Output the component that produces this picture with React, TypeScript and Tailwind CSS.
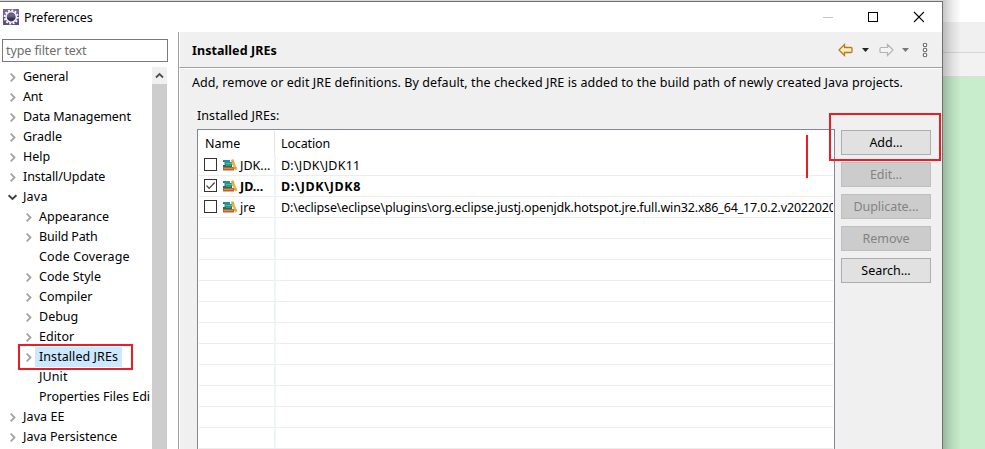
import React from "react";

type Node = { label: string; depth: 0 | 1; arrow?: "right" | "down"; selected?: boolean; track: string };

const tree: Node[] = [
  { label: "General", depth: 0, arrow: "right", track: "tracking-[-0.1px]" },
  { label: "Ant", depth: 0, arrow: "right", track: "tracking-[-0.2px]" },
  { label: "Data Management", depth: 0, arrow: "right", track: "tracking-[-0.13px]" },
  { label: "Gradle", depth: 0, arrow: "right", track: "tracking-normal" },
  { label: "Help", depth: 0, arrow: "right", track: "tracking-normal" },
  { label: "Install/Update", depth: 0, arrow: "right", track: "tracking-[-0.1px]" },
  { label: "Java", depth: 0, arrow: "down", track: "tracking-[0.2px]" },
  { label: "Appearance", depth: 1, arrow: "right", track: "tracking-normal" },
  { label: "Build Path", depth: 1, arrow: "right", track: "tracking-[-0.15px]" },
  { label: "Code Coverage", depth: 1, track: "tracking-[0.15px]" },
  { label: "Code Style", depth: 1, arrow: "right", track: "tracking-[0.05px]" },
  { label: "Compiler", depth: 1, arrow: "right", track: "tracking-normal" },
  { label: "Debug", depth: 1, arrow: "right", track: "tracking-normal" },
  { label: "Editor", depth: 1, arrow: "right", track: "tracking-normal" },
  { label: "Installed JREs", depth: 1, arrow: "right", selected: true, track: "tracking-[0.07px]" },
  { label: "JUnit", depth: 1, track: "tracking-[0.1px]" },
  { label: "Properties Files Edi", depth: 1, track: "tracking-normal" },
  { label: "Java EE", depth: 0, arrow: "right", track: "tracking-[0.1px]" },
  { label: "Java Persistence", depth: 0, arrow: "right", track: "tracking-normal" },
];

const jres = [
  { name: "JDK...", location: "D:\\JDK\\JDK11", checked: false, track: "tracking-[0.23px]" },
  { name: "JD...", location: "D:\\JDK\\JDK8", checked: true, track: "tracking-[0.6px]" },
  { name: "jre", location: "D:\\eclipse\\eclipse\\plugins\\org.eclipse.justj.openjdk.hotspot.jre.full.win32.x86_64_17.0.2.v2022020", checked: false, track: "tracking-[-0.155px]" },
];

const buttons = [
  { label: "Add...", enabled: true },
  { label: "Edit...", enabled: false },
  { label: "Duplicate...", enabled: false },
  { label: "Remove", enabled: false },
  { label: "Search...", enabled: true },
];

function EclipseIcon() {
  return (
    <svg width="16" height="16" viewBox="0 0 16 16" className="shrink-0">
      <rect width="16" height="16" fill="#5f4d84" />
      <path d="M0 0h16v4L0 8z" fill="#75659a" />
      <circle cx="8.200" cy="8" r="6.600" fill="none" stroke="#fff" strokeWidth="1.800" strokeDasharray="1.900 1.555" />
      <circle cx="8.200" cy="8" r="5.200" fill="#3a3158" stroke="#f4f2f6" strokeWidth="1.600" />
      <path d="M4.500 5.500q3.500-3 7.400 0v2H4.200z" fill="#6a6384" />
      <path d="M4 8h8.400" stroke="#8b84a4" strokeWidth=".6" />
    </svg>
  );
}

function Chevron({ dir }: { dir?: "right" | "down" }) {
  return (
    <svg width="10" height="10" viewBox="0 0 10 10" className="shrink-0">
      {dir === "right" && <path d="M3.700 1.700 7.500 5.500 3.700 9.300" fill="none" stroke="#a2a2a2" strokeWidth="1.800" />}
      {dir === "down" && <path d="M1.600 3.200 5.500 7 9.400 3.200" fill="none" stroke="#404040" strokeWidth="1.900" />}
    </svg>
  );
}

function BooksIcon() {
  return (
    <svg width="15" height="12" viewBox="0 0 15 12" className="shrink-0">
      <path d="M0 1h7v2H0z" fill="#2b86bd" />
      <path d="M0 2h1.500v1H0z" fill="#1a6090" />
      <path d="M1.500 3h8v3h-8z" fill="#239a78" />
      <path d="M3 4h6v1H3z" fill="#55bd9c" />
      <path d="M0 6h9v2H0z" fill="#1c6f5c" />
      <path d="M3 6h5v1H3z" fill="#3f9b84" />
      <path d="M0 8h11v3.500H0z" fill="#b9642f" />
      <path d="M1 9h9v1H1z" fill="#d98a50" />
      <path d="m7.800 1 2.400-1 4.200 10.400-2.400 1z" fill="#edb24c" />
      <path d="m8.600 3 2.400-1M11.300 9.500l2.400-1" stroke="#c8862c" strokeWidth=".8" />
    </svg>
  );
}

function CheckBox({ checked }: { checked: boolean }) {
  return (
    <svg width="13" height="13" viewBox="0 0 13 13" className="mb-[1px] shrink-0">
      <rect x=".5" y=".5" width="12" height="12" fill="#fff" stroke="#333" />
      {checked && <path d="m2.500 6.500 2.700 2.800 5.400-5.800" fill="none" stroke="#444" strokeWidth="1.200" />}
    </svg>
  );
}

function TitleBar() {
  return (
    <header className="flex h-[30px] shrink-0 items-center bg-white pl-[3px]">
      <EclipseIcon />
      <span className="ml-[5px] pt-[1px] tracking-[-0.08px]">Preferences</span>
      <svg width="101" height="12" viewBox="0 0 101 12" className="mr-[18px] mb-[1px] ml-auto">
        <path d="M0 6.500h10" stroke="#c4c4c4" />
        <rect x="45.500" y="1.500" width="9" height="9" fill="none" stroke="#000" />
        <path d="m91 1 10 10M101 1 91 11" stroke="#000" strokeWidth="1.100" />
      </svg>
    </header>
  );
}

function Sidebar() {
  return (
    <aside className="flex w-[178px] shrink-0 flex-col bg-white pt-[7px] pl-[2px]">
      <div className="flex h-[23px] w-[166px] shrink-0 items-center border border-[#7a7a7a] pl-[3px] tracking-[-0.1px] text-[#6d6d6d]">type filter text</div>
      <div className="mt-[5px] flex w-[165px] flex-1 overflow-hidden">
        <ul className="w-[149px] shrink-0 overflow-hidden">
          {tree.map((n) => (
            <li key={n.label} className={`flex h-5 items-center whitespace-nowrap ${n.depth ? "pl-[21px]" : "pl-[5px]"}`}>
              <Chevron dir={n.arrow} />
              <span className={`ml-[2px] flex h-5 items-center px-1 ${n.track} ${n.selected ? "bg-[#cce8ff]" : ""}`}>{n.label}</span>
            </li>
          ))}
        </ul>
        <div className="ml-[1px] flex w-[15px] flex-col bg-[#cdcdcd]">
          <div className="flex h-[17px] items-center justify-center bg-[#f0f0f0]">
            <svg width="9" height="7" viewBox="0 0 9 7"><path d="m1 5.500 3.500-3.500L8 5.500" fill="none" stroke="#505050" strokeWidth="1.800" /></svg>
          </div>
        </div>
      </div>
    </aside>
  );
}

function Toolbar() {
  return (
    <svg width="92" height="18" viewBox="0 0 92 18" className="mr-[12px] ml-auto">
      <defs>
        <linearGradient id="gold" x1="0" y1="0" x2="0" y2="1">
          <stop stopColor="#fffdf0" />
          <stop offset="1" stopColor="#ffe28a" />
        </linearGradient>
      </defs>
      <path d="M1 9 6.500 3.500v3h6.500q1 0 1 1v3q0 1-1 1H6.500v3z" fill="url(#gold)" stroke="#b87a1c" strokeWidth="1.300" />
      <path d="M24 7h7l-3.500 4z" fill="#222" />
      <path d="M55 9 49.500 3.500v3H43q-1 0-1 1v3q0 1 1 1h6.500v3z" fill="#f4f4f4" stroke="#b3b3b3" strokeWidth="1.200" />
      <path d="M64 7h7l-3.500 4z" fill="#777" />
      <g fill="#fff" stroke="#6a6a6a" strokeWidth="1.100">
        <circle cx="87" cy="4" r="1.800" />
        <circle cx="87" cy="9" r="1.800" />
        <circle cx="87" cy="14" r="1.800" />
      </g>
    </svg>
  );
}

function JreTable() {
  return (
    <div className="flex w-[638px] shrink-0 flex-col border border-b-0 border-[#828790] bg-white px-[1px]">
      <div className="flex h-[25px] shrink-0 pt-[1px]">
        <div className="flex h-full w-[76px] items-center border-r border-[#e5e5e5] pt-[1px] pl-[6px]">Name</div>
        <div className="pt-[3px] pl-[6px] tracking-[-0.15px]">Location</div>
      </div>
      {Array.from({ length: 14 }, (_, i) => {
        const jre = jres[i];
        return (
          <div key={i} className={`flex h-[21px] shrink-0 items-center border-b border-[#ededed] whitespace-nowrap ${jre?.checked ? "font-bold" : ""}`}>
            <div className="flex h-[20px] w-[77px] shrink-0 items-center border-r-2 border-[#edf2fb] pl-[5px]">
              {jre && (
                <>
                  <CheckBox checked={jre.checked} />
                  <span className="ml-[6px] flex"><BooksIcon /></span>
                  <span className="ml-[2px] pt-[2px]">{jre.name}</span>
                </>
              )}
            </div>
            <div className={`min-w-0 flex-1 overflow-hidden pt-[2px] pl-[5px] ${jre ? jre.track : ""}`}>{jre?.location}</div>
          </div>
        );
      })}
    </div>
  );
}

export default function App() {
  return (
    <div className="relative flex h-[449px] w-[985px] overflow-hidden bg-white font-['Noto_Sans','Noto_Sans_CJK_SC',sans-serif] text-[12.5px] leading-5 text-black">
      <div className="flex w-[943px] shrink-0 flex-col border-t border-[#d8d8d8]">
        <div className="flex flex-1 flex-col overflow-hidden border-t border-r border-[#707070]">
          <TitleBar />
          <div className="flex min-h-0 flex-1">
            <Sidebar />
            <main className="flex min-w-0 flex-1 flex-col border-l border-[#a0a0a0] bg-[#f0f0f0]">
              <div className="flex h-[36px] shrink-0 items-center border-b border-l border-b-[#a0a0a0] border-l-white pl-[12px]">
                <h1 className="pt-[3px] font-bold tracking-[0.07px]">Installed JREs</h1>
                <Toolbar />
              </div>
              <div className="flex min-h-0 flex-1 flex-col border-t border-l border-white pl-[12px]">
                <p className="mt-[4px] h-5 tracking-[0.077px] whitespace-nowrap">Add, remove or edit JRE definitions. By default, the checked JRE is added to the build path of newly created Java projects.</p>
                <p className="mt-[13px] ml-[5px] h-5 tracking-[0.07px]">Installed JREs:</p>
                <div className="mt-[3px] ml-[5px] flex min-h-0 flex-1">
                  <JreTable />
                  <div className="mt-[1px] ml-[6px] flex w-[90px] flex-col gap-[7px]">
                    {buttons.map((b) => (
                      <button key={b.label} className={`flex h-[25px] items-center justify-center border tracking-[-0.04px] ${b.enabled ? "border-[#adadad] bg-[#e1e1e1]" : "border-[#bfbfbf] bg-[#cccccc] text-[#838383]"}`}>
                        {b.label}
                      </button>
                    ))}
                  </div>
                </div>
              </div>
            </main>
          </div>
        </div>
      </div>
      <div className="relative flex flex-1 flex-col">
        <div className="h-[22px] bg-white" />
        <div className="h-[31px] border-b border-[#d6d6d6] bg-[#f0f0f0]" />
        <div className="h-[24px] border-b border-[#dddddd] bg-[#f2f2f2]" />
        <div className="flex-1 bg-[#c7edcc]" />
        <div className="absolute inset-y-0 left-0 w-[18px] bg-linear-to-r from-black/22 via-black/8 to-transparent" />
      </div>
      <div className="absolute top-[344px] left-[18px] h-[26px] w-[115px] border-2 border-[#ed1c24]" />
      <div className="absolute top-[113px] left-[829px] h-[48px] w-[112px] border-2 border-[#ed1c24]" />
      <div className="absolute top-[135px] left-[806px] h-[43px] w-[2px] bg-[#ed1c24]" />
    </div>
  );
}
